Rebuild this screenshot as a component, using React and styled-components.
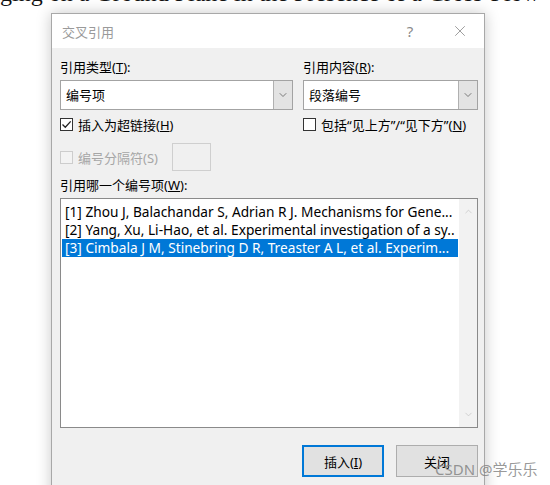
import styled, { createGlobalStyle } from "styled-components"
import { X, ChevronDown, ChevronUp } from "lucide-react"

const GlobalStyle = createGlobalStyle`
    html, body { margin:0; padding:0; background:#fff; }
    body { font-family:"Noto Sans", "Noto Sans CJK SC", sans-serif; }
`

const Page = styled.div`
    position:relative;
    width:550px;
    height:485px;
    overflow:hidden;
    background:#fff;
`

const PaperLine = styled.div`
    height:10px;
    overflow:hidden;
    white-space:nowrap;
    font-family:"Liberation Serif", serif;
    font-size:24px;
    line-height:26px;
    color:#111;
    span { display:block; margin-top:-20px; }
`

const Dialog = styled.div`
    margin:3px 0 0 51px;
    width:432px;
    height:490px;
    border:1px solid #a8a8a8;
    background:#f0f0f0;
    box-shadow:0 0 14px rgba(0,0,0,0.22);
    display:flex;
    flex-direction:column;
    font-size:13px;
    color:#000;
`

const TitleBar = styled.div`
    height:34px;
    background:#fff;
    display:flex;
    align-items:center;
    padding-left:10px;
`

const Title = styled.span`
    flex:1;
    color:#9a9a9a;
    font-size:13px;
`

const TitleButton = styled.span`
    width:${p => p.$wide ? 46 : 30}px;
    height:34px;
    display:flex;
    align-items:center;
    justify-content:center;
    color:#8a8a8a;
    font-size:15px;
    margin-right:${p => p.$wide ? 1 : 12}px;
`

const Body = styled.div`
    padding:11px 6px 0 8px;
    display:flex;
    flex-direction:column;
`

const Columns = styled.div`
    display:grid;
    grid-template-columns:233px 175px;
    column-gap:10px;
`

const Column = styled.div`
    display:flex;
    flex-direction:column;
`

const Label = styled.div`
    height:16px;
    line-height:16px;
    margin-top:${p => p.$mt || 0}px;
    white-space:nowrap;
`

const Combo = styled.div`
    margin-top:5px;
    height:30px;
    box-sizing:border-box;
    border:1px solid #a3a3a3;
    background:#fff;
    display:flex;
`

const ComboText = styled.span`
    flex:1;
    padding-left:5px;
    line-height:28px;
`

const DropButton = styled.span`
    width:18px;
    border-left:1px solid #b0b0b0;
    background:#e3e3e3;
    display:flex;
    align-items:center;
    justify-content:center;
    color:#555;
`

const CheckRow = styled.label`
    display:flex;
    align-items:center;
    gap:5px;
    height:${p => p.$tall ? 28 : 18}px;
    margin-top:${p => p.$tall ? 10 : 5}px;
    color:${p => p.$disabled ? "#a6a6a6" : "#000"};
    white-space:nowrap;
`

const Box = styled.span`
    width:13px;
    height:13px;
    box-sizing:border-box;
    border:1px solid ${p => p.$disabled ? "#cdcdcd" : "#333"};
    background:${p => p.$disabled ? "#f3f3f3" : "#fff"};
    display:inline-flex;
    align-items:center;
    justify-content:center;
`

const SmallInput = styled.span`
    width:39px;
    height:28px;
    box-sizing:border-box;
    border:1px solid #cfcfcf;
    background:#f0f0f0;
    margin-left:9px;
`

const List = styled.div`
    margin-top:5px;
    height:230px;
    box-sizing:border-box;
    border:1px solid #8a8a8a;
    background:#fff;
    display:flex;
`

const Items = styled.div`
    flex:1;
    padding:4px 1px 0 1px;
    overflow:hidden;
`

const Item = styled.div`
    height:18px;
    line-height:18px;
    padding-left:3px;
    font-size:13.7px;
    white-space:nowrap;
    overflow:hidden;
    background:${p => p.$selected ? "#0078d7" : "transparent"};
    color:${p => p.$selected ? "#fff" : "#000"};
`

const Scrollbar = styled.div`
    width:18px;
    background:#f2f2f2;
    display:flex;
    flex-direction:column;
    justify-content:space-between;
    padding:4px 0 4px;
    color:#c2c2c2;
`

const Arrow = styled.span`
    height:17px;
    display:flex;
    align-items:center;
    justify-content:center;
`

const Buttons = styled.div`
    margin-top:17px;
    display:flex;
    justify-content:flex-end;
    gap:12px;
`

const Button = styled.button`
    width:82px;
    height:32px;
    box-sizing:border-box;
    background:#e1e1e1;
    border:${p => p.$focused ? "2px solid #0078d7" : "1px solid #adadad"};
    font:inherit;
    font-size:13px;
    color:#000;
    padding:0;
`

const Watermark = styled.div`
    position:absolute;
    left:435px;
    top:458px;
    font-size:15px;
    color:rgba(125,125,125,0.8);
    white-space:nowrap;
`

function CheckMark() {
    return <svg width="11" height="11" viewBox="0 0 11 11">
        <path d="M1.5 5.5 L4.3 8.3 L9.7 2.4" fill="none" stroke="#222" strokeWidth="1.3" />
    </svg>
}

const items = [
    "[1] Zhou J, Balachandar S, Adrian R J. Mechanisms for Gene...",
    "[2] Yang, Xu, Li-Hao, et al. Experimental investigation of a sy..",
    "[3] Cimbala J M, Stinebring D R, Treaster A L, et al. Experim...",
]

function App() {
    return <Page>
        <GlobalStyle />
        <PaperLine><span>ging on a Ground Plane in the Presence of a Cross-Flow</span></PaperLine>
        <Dialog>
            <TitleBar>
                <Title>交叉引用</Title>
                <TitleButton>?</TitleButton>
                <TitleButton $wide><X size={18} strokeWidth={1.1} /></TitleButton>
            </TitleBar>
            <Body>
                <Columns>
                    <Column>
                        <Label>引用类型(<u>T</u>):</Label>
                        <Combo>
                            <ComboText>编号项</ComboText>
                            <DropButton><ChevronDown size={12} strokeWidth={1.5} /></DropButton>
                        </Combo>
                        <CheckRow>
                            <Box><CheckMark /></Box>
                            <span>插入为超链接(<u>H</u>)</span>
                        </CheckRow>
                        <CheckRow $tall $disabled>
                            <Box $disabled />
                            <span>编号分隔符(S)</span>
                            <SmallInput />
                        </CheckRow>
                    </Column>
                    <Column>
                        <Label>引用内容(<u>R</u>):</Label>
                        <Combo>
                            <ComboText>段落编号</ComboText>
                            <DropButton><ChevronDown size={12} strokeWidth={1.5} /></DropButton>
                        </Combo>
                        <CheckRow>
                            <Box />
                            <span>包括“见上方”/“见下方”(<u>N</u>)</span>
                        </CheckRow>
                    </Column>
                </Columns>
                <Label $mt={6}>引用哪一个编号项(<u>W</u>):</Label>
                <List>
                    <Items>
                        {items.map((t, i) => <Item key={i} $selected={i === 2}>{t}</Item>)}
                    </Items>
                    <Scrollbar>
                        <Arrow><ChevronUp size={11} strokeWidth={1.5} /></Arrow>
                        <Arrow><ChevronDown size={11} strokeWidth={1.5} /></Arrow>
                    </Scrollbar>
                </List>
                <Buttons>
                    <Button $focused>插入(<u>I</u>)</Button>
                    <Button>关闭</Button>
                </Buttons>
            </Body>
        </Dialog>
        <Watermark>CSDN @学乐乐</Watermark>
    </Page>
}

export default App
